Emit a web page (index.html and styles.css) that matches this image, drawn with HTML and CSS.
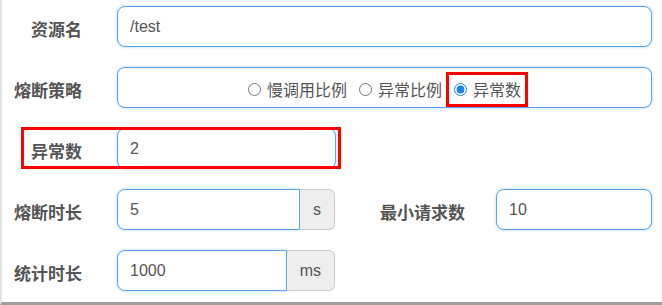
FILE: index.html
```html
<!DOCTYPE html>
<html lang="zh-CN">
<head>
<meta charset="utf-8">
<title>降级规则</title>
<link rel="stylesheet" href="styles.css">
</head>
<body>
<div class="page">
  <form class="form">
    <div class="row">
      <label class="label">资源名</label>
      <input class="input full" type="text" value="/test">
    </div>
    <div class="row">
      <label class="label">熔断策略</label>
      <div class="input full radios">
        <label class="radio"><input type="radio" name="grade"><span>慢调用比例</span></label>
        <label class="radio"><input type="radio" name="grade"><span>异常比例</span></label>
        <label class="radio marked"><input type="radio" name="grade" checked><span>异常数</span></label>
      </div>
    </div>
    <div class="row row-marked">
      <label class="label">异常数</label>
      <input class="input short" type="text" value="2">
    </div>
    <div class="row">
      <label class="label">熔断时长</label>
      <div class="group">
        <input class="input grouped" type="text" value="5">
        <span class="addon">s</span>
      </div>
      <label class="label label2">最小请求数</label>
      <input class="input full" type="text" value="10">
    </div>
    <div class="row">
      <label class="label">统计时长</label>
      <div class="group">
        <input class="input grouped" type="text" value="1000">
        <span class="addon">ms</span>
      </div>
    </div>
  </form>
</div>
</body>
</html>
```

FILE: styles.css
```css
html, body {
  margin: 0;
  padding: 0;
  background: #fff;
}

.page {
  width: 662px;
  height: 305px;
  box-sizing: border-box;
  border-left: 2px solid #e3e3e3;
  border-bottom: 3px solid #9f9f9f;
  overflow: hidden;
  font-family: "Liberation Sans", "Noto Sans CJK SC", sans-serif;
  color: #555;
}

.form {
  display: flex;
  flex-direction: column;
  gap: 20px;
  padding: 6px 10px 0 0;
  margin: 0;
}

.row {
  display: flex;
  align-items: center;
  height: 41px;
  position: relative;
}

.label {
  width: 80px;
  flex: none;
  margin-right: 35px;
  padding-top: 4px;
  text-align: right;
  font-family: "Noto Sans CJK SC", sans-serif;
  font-weight: 700;
  font-size: 17px;
  line-height: 20px;
  color: #555;
  white-space: nowrap;
}

.label2 {
  width: 130px;
  margin-right: 31px;
}

.input {
  box-sizing: border-box;
  height: 41px;
  margin: 0;
  padding: 0 12px;
  border: 1px solid #5aa3ea;
  border-radius: 8px;
  box-shadow: 0 0 3px rgba(102, 175, 233, 0.55);
  background: #fff;
  font-family: "Liberation Sans", sans-serif;
  font-size: 16px;
  color: #555;
  outline: none;
}

.full {
  flex: 1;
  min-width: 0;
}

.short {
  width: 219px;
}

.radios {
  display: flex;
  align-items: center;
  justify-content: center;
  padding-top: 3px;
}

.radio {
  display: inline-flex;
  align-items: center;
  gap: 6px;
  height: 21px;
  position: relative;
  font-family: "Noto Sans CJK SC", sans-serif;
  font-size: 16px;
  color: #555;
}

.radio + .radio {
  margin-left: 12px;
}

.radio input {
  margin: 0;
  width: 13px;
  height: 13px;
  accent-color: #1b82ec;
}

.marked::after {
  content: "";
  position: absolute;
  top: -7px;
  bottom: -7px;
  left: -8px;
  right: -7px;
  border: 3px solid #f00;
}

.row-marked::after {
  content: "";
  position: absolute;
  left: 19px;
  top: -1px;
  width: 320px;
  height: 42px;
  box-sizing: border-box;
  border: 3px solid #f00;
}

.group {
  display: flex;
  width: 218px;
  height: 41px;
  flex: none;
}

.grouped {
  flex: 1;
  min-width: 0;
  border-radius: 8px 0 0 8px;
}

.addon {
  display: flex;
  align-items: center;
  justify-content: center;
  box-sizing: border-box;
  padding: 0 13px;
  background: #eee;
  border: 1px solid #ccc;
  border-left: 0;
  border-radius: 0 6px 6px 0;
  font-size: 16px;
  color: #555;
}
```
